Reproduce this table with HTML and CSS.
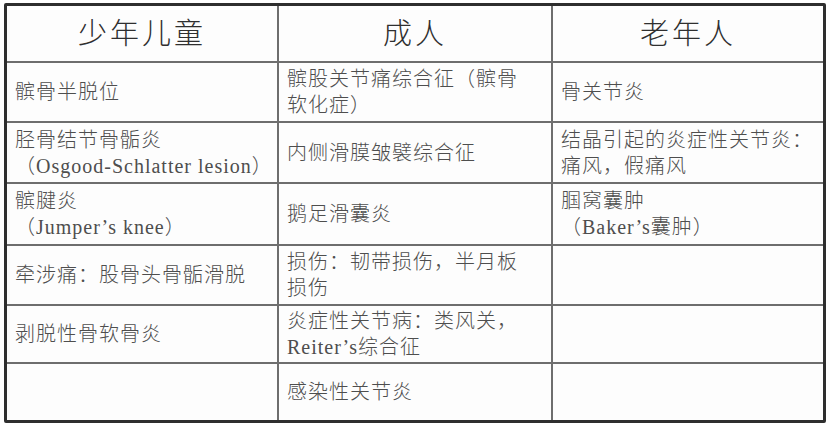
FILE: index.html
```html
<!DOCTYPE html>
<html lang="zh-CN">
<head>
<meta charset="utf-8">
<title>膝关节疾病分布</title>
<link rel="stylesheet" href="styles.css">
</head>
<body>
<div class="table">
  <div class="cell head">少年儿童</div>
  <div class="cell head">成人</div>
  <div class="cell head">老年人</div>

  <div class="cell">髌骨半脱位</div>
  <div class="cell">髌股关节痛综合征（髌骨<br>软化症）</div>
  <div class="cell">骨关节炎</div>

  <div class="cell">胫骨结节骨骺炎<br>（Osgood-Schlatter lesion）</div>
  <div class="cell">内侧滑膜皱襞综合征</div>
  <div class="cell">结晶引起的炎症性关节炎：<br>痛风，假痛风</div>

  <div class="cell">髌腱炎<br>（Jumper’s knee）</div>
  <div class="cell">鹅足滑囊炎</div>
  <div class="cell">腘窝囊肿<br>（Baker’s囊肿）</div>

  <div class="cell">牵涉痛：股骨头骨骺滑脱</div>
  <div class="cell">损伤：韧带损伤，半月板<br>损伤</div>
  <div class="cell"></div>

  <div class="cell">剥脱性骨软骨炎</div>
  <div class="cell">炎症性关节病：类风关，<br>Reiter’s综合征</div>
  <div class="cell"></div>

  <div class="cell"></div>
  <div class="cell">感染性关节炎</div>
  <div class="cell"></div>
</div>
</body>
</html>
```

FILE: styles.css
```css
html, body {
  margin: 0;
  padding: 0;
  background: #ffffff;
}

body {
  padding: 3px 0 0 4px;
  font-family: "Liberation Serif", "Noto Sans CJK SC", serif;
}

.table {
  display: grid;
  width: 816px;
  grid-template-columns: 270px 272px 270px;
  grid-template-rows: 55px 58px 59px 60px 58px 56px 56px;
  gap: 2px;
  background: #6e6e6e;
  border: 3px solid #2e2e2e;
  border-radius: 2px;
}

.cell {
  background: #fdfdfd;
  display: flex;
  align-items: center;
  padding: 0 0 0 8px;
  font-size: 20px;
  line-height: 26px;
  letter-spacing: 1px;
  font-weight: 300;
  color: #4e4e4e;
  white-space: nowrap;
  overflow: hidden;
}

.head {
  justify-content: center;
  padding: 0;
  font-size: 29px;
  letter-spacing: 3px;
  color: #2f2f2f;
  font-weight: 300;
}
```
